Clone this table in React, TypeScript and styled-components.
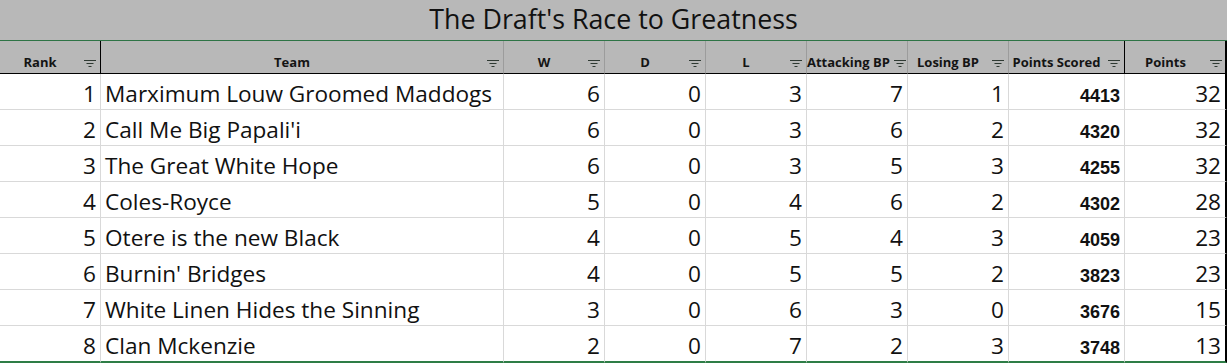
import React from "react";
import styled, { createGlobalStyle } from "styled-components";

interface Team {
  rank: number;
  name: string;
  w: number;
  d: number;
  l: number;
  attackingBp: number;
  losingBp: number;
  scored: number;
  points: number;
}

const teams: Team[] = [
  { rank: 1, name: "Marximum Louw Groomed Maddogs", w: 6, d: 0, l: 3, attackingBp: 7, losingBp: 1, scored: 4413, points: 32 },
  { rank: 2, name: "Call Me Big Papali'i", w: 6, d: 0, l: 3, attackingBp: 6, losingBp: 2, scored: 4320, points: 32 },
  { rank: 3, name: "The Great White Hope", w: 6, d: 0, l: 3, attackingBp: 5, losingBp: 3, scored: 4255, points: 32 },
  { rank: 4, name: "Coles-Royce", w: 5, d: 0, l: 4, attackingBp: 6, losingBp: 2, scored: 4302, points: 28 },
  { rank: 5, name: "Otere is the new Black", w: 4, d: 0, l: 5, attackingBp: 4, losingBp: 3, scored: 4059, points: 23 },
  { rank: 6, name: "Burnin' Bridges", w: 4, d: 0, l: 5, attackingBp: 5, losingBp: 2, scored: 3823, points: 23 },
  { rank: 7, name: "White Linen Hides the Sinning", w: 3, d: 0, l: 6, attackingBp: 3, losingBp: 0, scored: 3676, points: 15 },
  { rank: 8, name: "Clan Mckenzie", w: 2, d: 0, l: 7, attackingBp: 2, losingBp: 3, scored: 3748, points: 13 },
];

type Edge = "grid" | "dark" | "outer";

const columns: { label: string; edge: Edge }[] = [
  { label: "Rank", edge: "dark" },
  { label: "Team", edge: "grid" },
  { label: "W", edge: "grid" },
  { label: "D", edge: "grid" },
  { label: "L", edge: "grid" },
  { label: "Attacking BP", edge: "grid" },
  { label: "Losing BP", edge: "grid" },
  { label: "Points Scored", edge: "dark" },
  { label: "Points", edge: "outer" },
];

const GlobalStyle = createGlobalStyle`
  html, body {
    margin: 0;
    padding: 0;
    background: #ffffff;
  }
  body {
    font-family: "Open Sans", Lato, sans-serif;
    color: #000;
  }
`;

const Sheet = styled.div`
  width: 1227px;
  height: 364px;
  overflow: hidden;
`;

const TitleBar = styled.div`
  height: 41px;
  box-sizing: border-box;
  padding-top: 6px;
  background: #b8b8b8;
  border-bottom: 1px solid #2e7446;
  text-align: center;
  font-size: 26.8px;
  line-height: 1;
  color: #111;
`;

const Table = styled.div`
  display: grid;
  grid-template-columns: 101px 403px 101px 101px 101px 101px 101px 116px 102px;
`;

const edgeColor = (edge: Edge, header: boolean) =>
  edge === "grid" ? (header ? "#9c9c9c" : "#d9d9d9") : header || edge !== "dark" ? "#000" : "#d9d9d9";

const HeaderCell = styled.div<{ $edge: Edge }>`
  box-sizing: border-box;
  height: 33px;
  background: #b8b8b8;
  border-bottom: 1px solid #000;
  border-right: ${({ $edge }) => ($edge === "outer" ? 2 : 1)}px solid
    ${({ $edge }) => edgeColor($edge, true)};
  display: grid;
  grid-template-columns: 1fr 12px;
  align-items: end;
  padding: 0 ${({ $edge }) => ($edge === "outer" ? 3 : 4)}px 4px 0;
`;

const HeaderLabel = styled.span`
  padding-right: 4px;
  font-size: 13px;
  font-weight: 700;
  line-height: 1;
  text-align: center;
  white-space: nowrap;
  color: #141414;
`;

const FilterIcon = styled.svg`
  display: block;
  margin-bottom: 2px;
`;

const Cell = styled.div<{ $edge: Edge; $last?: boolean; $align?: "left" | "right" }>`
  box-sizing: border-box;
  height: ${({ $last }) => ($last ? 37 : 36)}px;
  border-bottom: ${({ $last }) => ($last ? "2px solid #2e7d46" : "1px solid #d9d9d9")};
  border-right: ${({ $edge }) => ($edge === "outer" ? 2 : 1)}px solid
    ${({ $edge }) => edgeColor($edge, false)};
  display: flex;
  align-items: flex-end;
  justify-content: ${({ $align }) => ($align === "left" ? "flex-start" : "flex-end")};
  padding: 0 4px 3px 4px;
  font-size: 22.6px;
  line-height: 1;
  white-space: nowrap;
  color: #111;
`;

const ScoredValue = styled.span`
  font-family: "Liberation Sans", Arial, sans-serif;
  font-weight: 700;
  font-size: 18px;
  margin-bottom: 1px;
`;

function Filter() {
  return (
    <FilterIcon width="12" height="7" viewBox="0 0 12 7">
      <g stroke="#2f3a33" strokeWidth="1">
        <line x1="0" y1="0.5" x2="12" y2="0.5" />
        <line x1="2.5" y1="3.5" x2="9.5" y2="3.5" />
        <line x1="4.5" y1="6.5" x2="7.5" y2="6.5" />
      </g>
    </FilterIcon>
  );
}

function App() {
  return (
    <>
      <GlobalStyle />
      <Sheet>
        <TitleBar>The Draft's Race to Greatness</TitleBar>
        <Table>
          {columns.map((c) => (
            <HeaderCell key={c.label} $edge={c.edge}>
              <HeaderLabel>{c.label}</HeaderLabel>
              <Filter />
            </HeaderCell>
          ))}
          {teams.map((t, i) => {
            const last = i === teams.length - 1;
            return (
              <React.Fragment key={t.rank}>
                <Cell $edge="dark" $last={last}>{t.rank}</Cell>
                <Cell $edge="grid" $last={last} $align="left">{t.name}</Cell>
                <Cell $edge="grid" $last={last}>{t.w}</Cell>
                <Cell $edge="grid" $last={last}>{t.d}</Cell>
                <Cell $edge="grid" $last={last}>{t.l}</Cell>
                <Cell $edge="grid" $last={last}>{t.attackingBp}</Cell>
                <Cell $edge="grid" $last={last}>{t.losingBp}</Cell>
                <Cell $edge="dark" $last={last}>
                  <ScoredValue>{t.scored}</ScoredValue>
                </Cell>
                <Cell $edge="outer" $last={last}>{t.points}</Cell>
              </React.Fragment>
            );
          })}
        </Table>
      </Sheet>
    </>
  );
}

export default App;
